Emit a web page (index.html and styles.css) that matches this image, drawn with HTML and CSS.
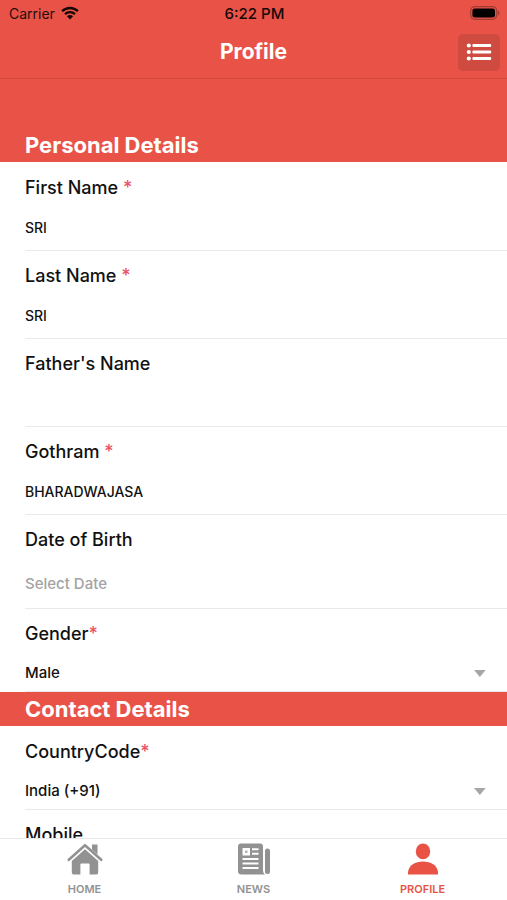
FILE: index.html
```html
<!DOCTYPE html>
<html lang="en">
<head>
<meta charset="utf-8">
<meta name="viewport" content="width=device-width, initial-scale=1">
<title>Profile</title>
<link rel="stylesheet" href="styles.css">
</head>
<body>
<header class="top">
  <div class="status">
    <div class="carrier">
      <span>Carrier</span>
      <svg width="18" height="14" viewBox="0 0 18 14" aria-hidden="true">
        <path d="M1.1 5.2a11.4 11.4 0 0 1 15.8 0M4 8.2a7.3 7.3 0 0 1 10 0" fill="none" stroke="#160807" stroke-width="2.3"/>
        <path d="M9 13.4 5.9 10.3a4.4 4.4 0 0 1 6.2 0z" fill="#160807"/>
      </svg>
    </div>
    <time class="clock">6:22 PM</time>
    <svg class="battery" width="30" height="14" viewBox="0 0 30 14" aria-hidden="true">
      <rect x=".7" y=".7" width="26" height="12.6" rx="4" fill="none" stroke="#a13a30" stroke-width="1.2"/>
      <rect x="2.4" y="2.4" width="22.6" height="9.2" rx="2.4" fill="#000"/>
      <path d="M28 4.8c2 .7 2 3.7 0 4.4z" fill="#a13a30"/>
    </svg>
  </div>
  <div class="nav">
    <h1>Profile</h1>
    <button class="menu" type="button" aria-label="Menu">
      <svg width="26" height="18" viewBox="0 0 26 18" aria-hidden="true">
        <g fill="#fff"><circle cx="2.8" cy="2.5" r="2.1"/><circle cx="2.8" cy="9" r="2.1"/><circle cx="2.8" cy="15.5" r="2.1"/>
        <rect x="6.4" y="1" width="18.8" height="3" rx="1"/><rect x="6.4" y="7.5" width="18.8" height="3" rx="1"/><rect x="6.4" y="14" width="18.8" height="3" rx="1"/></g>
      </svg>
    </button>
  </div>
</header>
<main class="form">
  <h2 class="section section-first">Personal Details</h2>
  <div class="field">
    <label for="first">First Name <span class="req">*</span></label>
    <input id="first" type="text" value="SRI">
  </div>
  <div class="field">
    <label for="last">Last Name <span class="req">*</span></label>
    <input id="last" type="text" value="SRI">
  </div>
  <div class="field">
    <label for="father">Father's Name</label>
    <input id="father" type="text">
  </div>
  <div class="field">
    <label for="gothram">Gothram <span class="req">*</span></label>
    <input id="gothram" type="text" value="BHARADWAJASA">
  </div>
  <div class="field field-date">
    <label for="dob">Date of Birth</label>
    <input id="dob" type="text" placeholder="Select Date">
  </div>
  <div class="field field-pick">
    <label for="gender">Gender<span class="req">*</span></label>
    <div class="pick">
      <select id="gender"><option>Male</option></select>
      <svg width="12" height="7" viewBox="0 0 12 7" aria-hidden="true"><path d="M0 0h12L6 7z" fill="#a6a6a6"/></svg>
    </div>
  </div>
  <h2 class="section">Contact Details</h2>
  <div class="field field-pick">
    <label for="code">CountryCode<span class="req">*</span></label>
    <div class="pick">
      <select id="code"><option>India (+91)</option></select>
      <svg width="12" height="7" viewBox="0 0 12 7" aria-hidden="true"><path d="M0 0h12L6 7z" fill="#a6a6a6"/></svg>
    </div>
  </div>
  <div class="field">
    <label for="mobile">Mobile</label>
    <input id="mobile" type="tel">
  </div>
</main>
<nav class="tabs">
  <a href="#home">
    <svg width="36" height="34" viewBox="0 0 36 34" aria-hidden="true">
      <path d="M1.8 17.8 18 3.2l16.2 14.6" fill="none" stroke="#929292" stroke-width="2.6" stroke-linejoin="round" stroke-linecap="round"/>
      <path d="M25 2.5h5.5v10L25 7.6z" fill="#929292"/>
      <path d="M18 7.2 4.8 19v11a2.6 2.6 0 0 0 2.6 2.6h6V22.4a1 1 0 0 1 1-1h7.200a1 1 0 0 1 1 1v10.200h6a2.600 2.600 0 0 0 2.600-2.600V19z" fill="#929292"/>
    </svg>
    <span>HOME</span>
  </a>
  <a href="#news">
    <svg width="34" height="34" viewBox="0 0 34 34" aria-hidden="true">
      <path fill-rule="evenodd" d="M4 1.500h19a3 3 0 0 1 3 3v24q0 2.500 2 4H4.500a3.500 3.500 0 0 1-3.500-3.500v-24.500a3 3 0 0 1 3-3zM5.500 6v7.500H13V6zM15 6.300v2h6.500v-2zm0 4.500v2h6.500v-2zM5.500 16v2h16v-2zm0 4.500v2h16v-2zm0 4.500v2h16v-2z" fill="#929292"/>
      <rect x="8" y="8.500" width="2.500" height="2.500" fill="#b5b5b5"/>
      <path d="M28 9a2.500 2.500 0 0 1 5 0v20.500a2.500 2.500 0 0 1-5 0z" fill="#929292"/>
    </svg>
    <span>NEWS</span>
  </a>
  <a class="active" href="#profile" aria-current="page">
    <svg width="34" height="34" viewBox="0 0 34 34" aria-hidden="true">
      <ellipse cx="17" cy="9.400" rx="7.200" ry="7.900" fill="#e85346"/>
      <path d="M2 32.500v-2.500C3 23 9 19.500 17 19.500S31 23 32 30v2.500z" fill="#e85346"/>
    </svg>
    <span>PROFILE</span>
  </a>
</nav>
</body>
</html>
```
FILE: styles.css
```css
* { box-sizing: border-box; }

body {
  margin: 0;
  height: 100vh;
  display: flex;
  flex-direction: column;
  overflow: hidden;
  background: #fff;
  color: #111;
  font-family: Inter, "Liberation Sans", sans-serif;
}

h1, h2 { margin: 0; font-weight: 700; color: #fff; }

.top { flex: none; background: #e95347; border-bottom: 1px solid #d54a3f; }

.status {
  display: grid;
  grid-template-columns: 1fr auto 1fr;
  align-items: center;
  height: 26px;
  padding: 0 7px 0 9px;
  font-size: 14px;
  color: #240d0b;
}
.carrier { display: flex; align-items: center; gap: 6px; }
.clock { font-size: 15px; font-weight: 500; color: #160807; }
.battery { justify-self: end; }

.nav {
  display: grid;
  grid-template-columns: 1fr auto 1fr;
  align-items: center;
  height: 52px;
  padding: 0 7px;
}
.nav h1 { grid-column: 2; font-size: 21px; line-height: 28px; }
.menu {
  justify-self: end;
  display: grid;
  place-items: center;
  width: 42px;
  height: 37px;
  padding: 0;
  border: 0;
  border-radius: 5px;
  background: #cf4a3f;
}

.form { flex: 1; min-height: 0; overflow: hidden; }

.section {
  padding: 3px 25px;
  background: #e95347;
  font-size: 22px;
  line-height: 28px;
}
.section-first { padding-top: 52px; }

.field {
  display: flex;
  flex-direction: column;
  gap: 16px;
  margin-left: 25px;
  padding: 14px 0 10px;
  border-bottom: 1px solid #e9e9e9;
}
.field + .field { padding-top: 13px; }
.field label { font-size: 18px; font-weight: 500; line-height: 24px; }
.req { color: #ec5266; }

.field input, .field select {
  width: 100%;
  height: 24px;
  padding: 0;
  border: 0;
  outline: 0;
  background: transparent;
  appearance: none;
  color: #111;
  font: 500 14px/24px Inter, "Liberation Sans", sans-serif;
}
.field select, .field-date input { font-size: 15px; }
.field input::placeholder { color: #a3a3a3; opacity: 1; }

.field-date { gap: 20px; padding-bottom: 12px; }
.field-pick { gap: 15px; padding-bottom: 6px; }
.pick { display: flex; align-items: center; padding-right: 21px; }

.tabs {
  flex: none;
  display: grid;
  grid-template-columns: repeat(3, 1fr);
  height: 62px;
  border-top: 1px solid #e8e8e8;
  background: #fff;
}
.tabs a {
  display: flex;
  flex-direction: column;
  align-items: center;
  gap: 6px;
  padding-top: 3px;
  color: #929292;
  font-size: 11px;
  font-weight: 600;
  line-height: 14px;
  text-decoration: none;
}
.tabs .active { color: #e85346; }
```
